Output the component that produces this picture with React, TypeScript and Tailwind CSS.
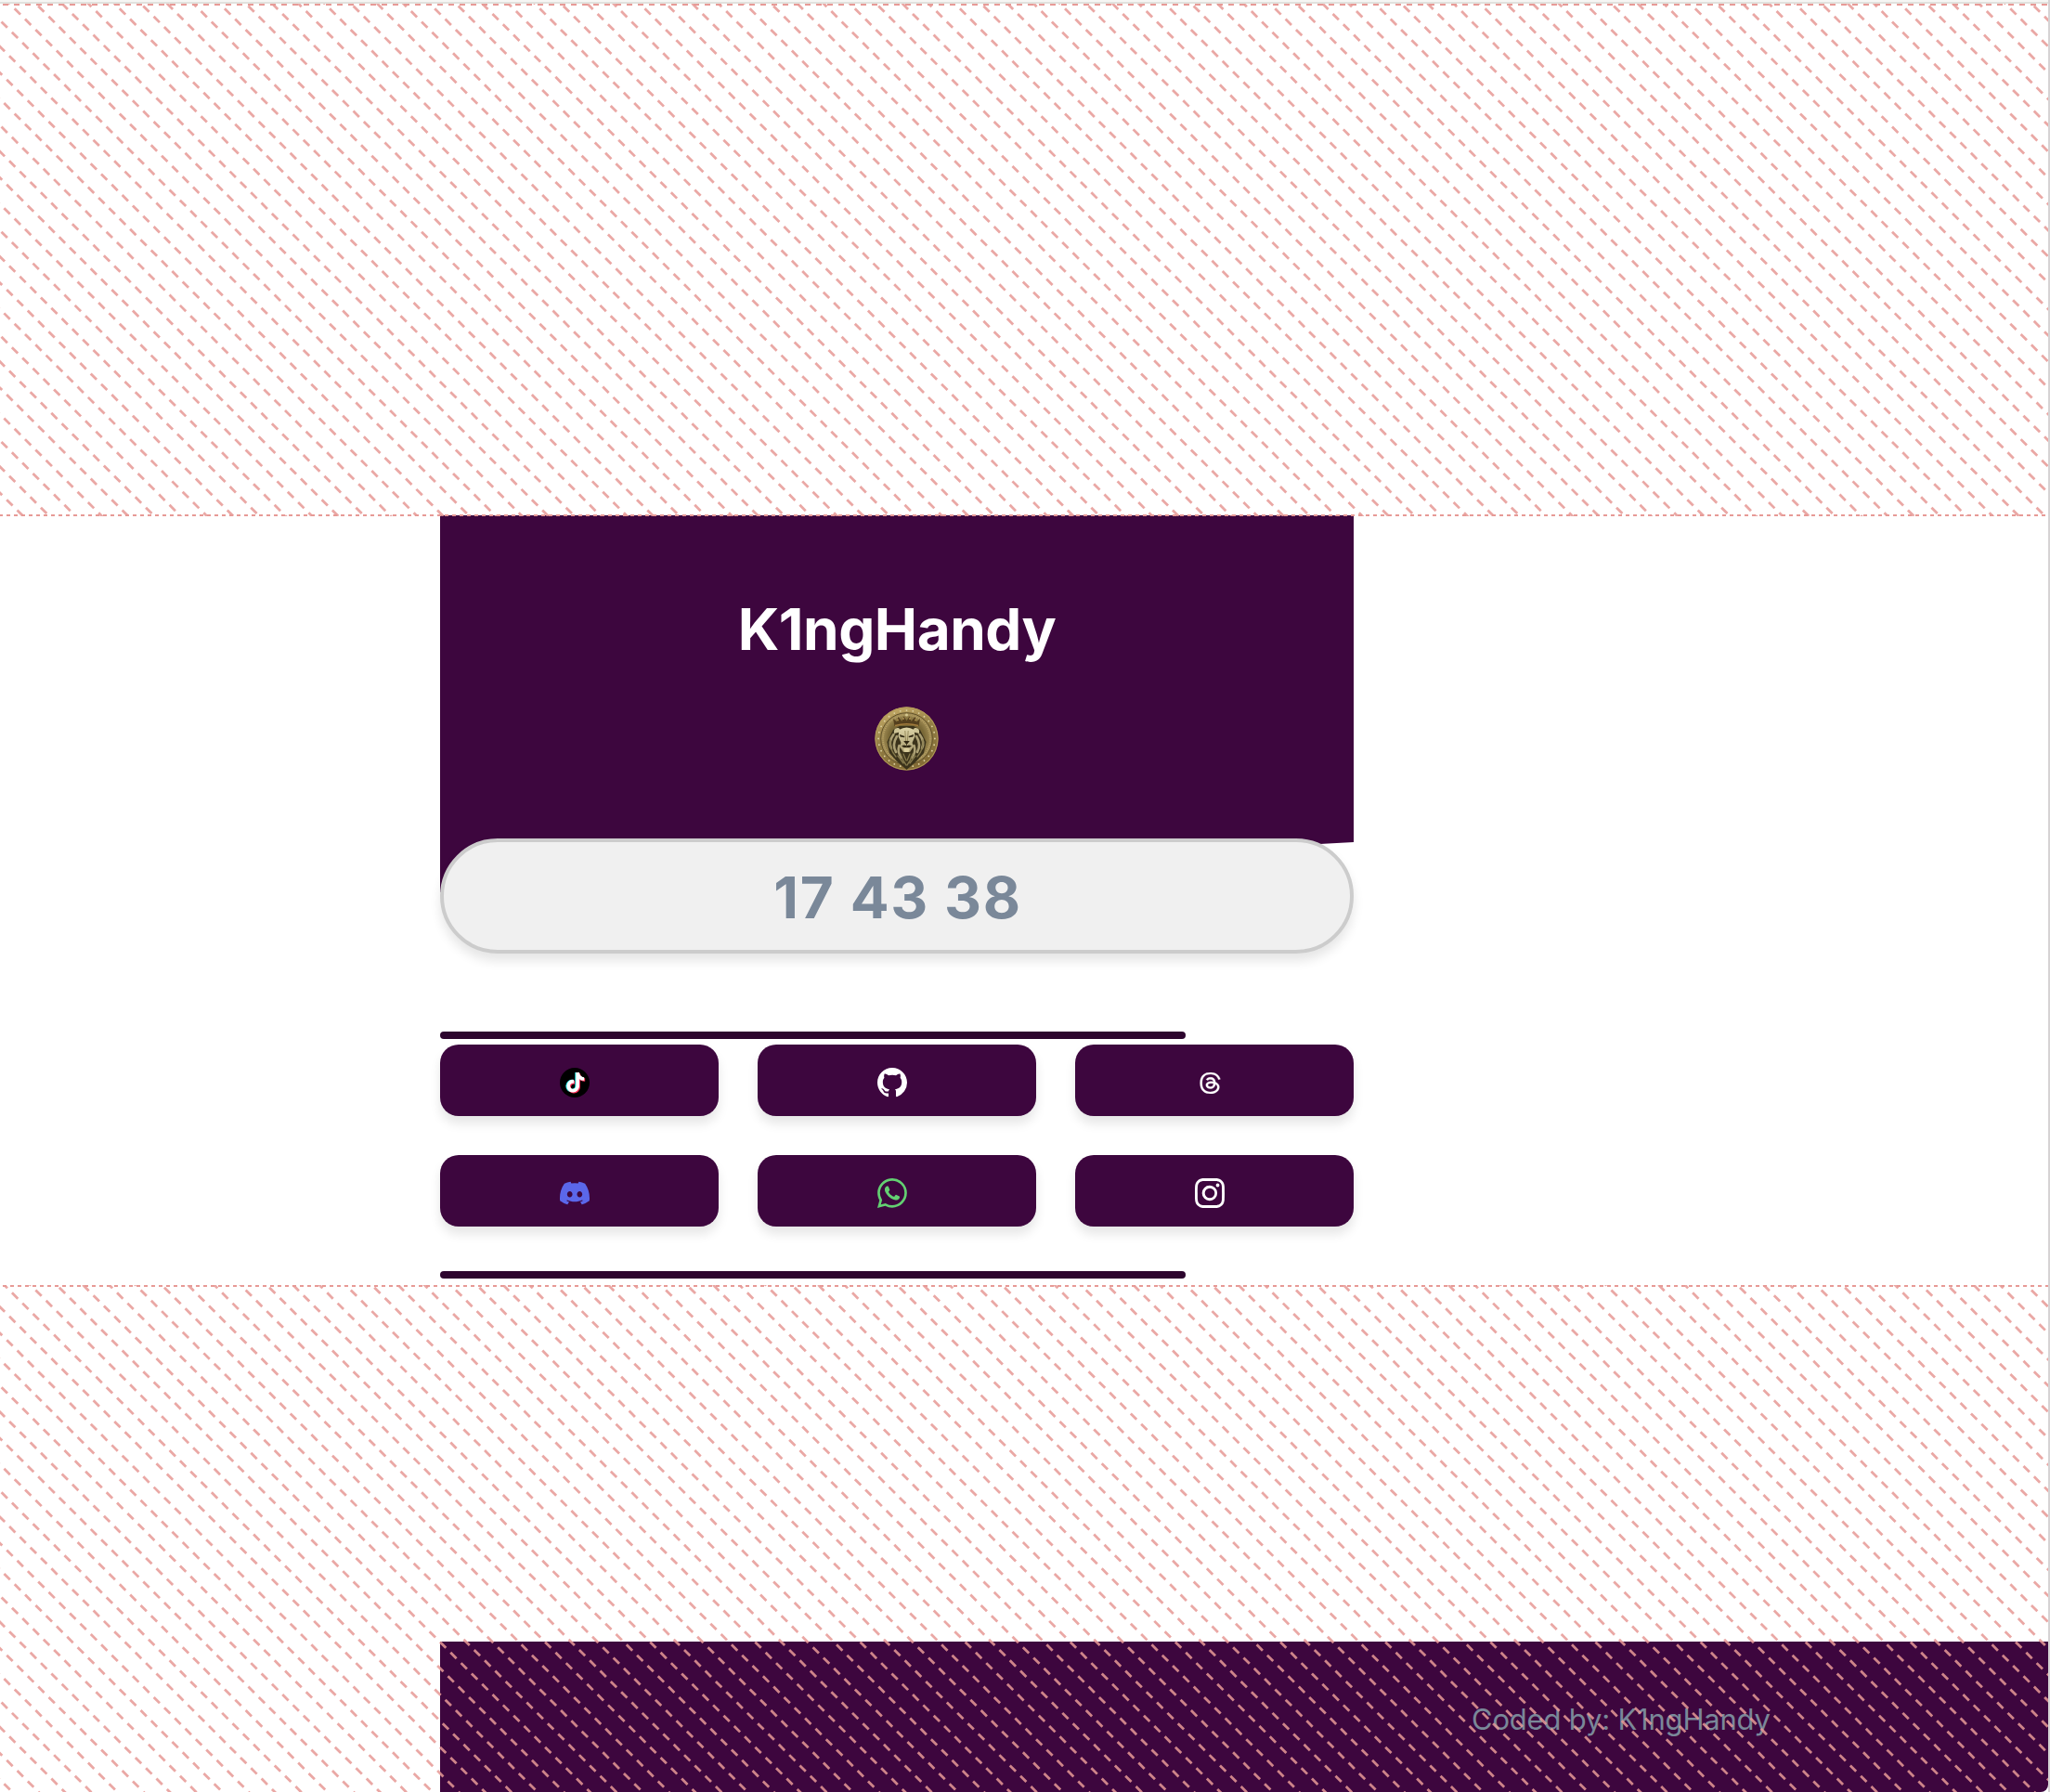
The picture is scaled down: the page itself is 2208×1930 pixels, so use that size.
import type { ReactNode } from "react";
import { FaTiktok } from "react-icons/fa6";
import { BsDiscord, BsGithub, BsInstagram, BsThreads, BsWhatsapp } from "react-icons/bs";

const HATCH = "#e79a96";

type HatchProps = {
  className: string;
  height: number;
  s: number;
  d: number;
  top?: [number, number];
  bottom?: [number, number];
};

/** Diagonal dashes, spaced 20px apart; s and d are the x+y and x-y of one dash centre. */
function Hatch({ className, height, s, d, top, bottom }: HatchProps) {
  const width = 2206;
  const r2 = Math.SQRT2;
  const u = s / r2 - 4.5 - 16 * 200;
  const v0 = -d / r2;
  const rows: number[] = [];
  const first = Math.ceil((-width / r2 - 10 - v0) / 20);
  const last = Math.floor((height / r2 + 10 - v0) / 20);
  for (let i = first; i <= last; i++) rows.push(v0 + i * 20);
  return (
    <svg className={className} width={width} height={height} viewBox={`0 0 ${width} ${height}`}>
      <g transform="rotate(45)" stroke={HATCH} strokeOpacity="0.86" strokeWidth="2.8" strokeDasharray="9 7">
        {rows.map((v) => (
          <line key={v} x1={u} x2={u + 16 * 400} y1={v} y2={v} />
        ))}
      </g>
      {top && (
        <line x1={top[0]} x2={width} y1="1" y2="1" stroke={HATCH} strokeWidth="2" strokeDasharray={top[1]} />
      )}
      {bottom && (
        <line x1={bottom[0]} x2={width} y1={height - 1} y2={height - 1} stroke={HATCH} strokeWidth="2" strokeDasharray={bottom[1]} />
      )}
    </svg>
  );
}

function Coin() {
  const dots = Array.from({ length: 28 }, (_, i) => (i * Math.PI * 2) / 28);
  return (
    <svg className="ml-5 h-[69px] w-[69px]" viewBox="0 0 69 69">
      <defs>
        <linearGradient id="rim" x1="0.3" y1="0" x2="0.7" y2="1">
          <stop offset="0" stopColor="#c4aa66" />
          <stop offset="0.45" stopColor="#917c44" />
          <stop offset="1" stopColor="#826a34" />
        </linearGradient>
        <radialGradient id="field" cx="0.5" cy="0.5" r="0.5">
          <stop offset="0" stopColor="#5b4b22" />
          <stop offset="0.7" stopColor="#7b6a38" />
          <stop offset="1" stopColor="#a8925a" />
        </radialGradient>
        <linearGradient id="face" x1="0" y1="0" x2="0" y2="1">
          <stop offset="0" stopColor="#ddd4a8" />
          <stop offset="1" stopColor="#a89c70" />
        </linearGradient>
      </defs>
      <circle cx="34.5" cy="34.5" r="34.2" fill="url(#rim)" />
      <circle cx="34.5" cy="34.5" r="33.5" fill="none" stroke="#b39a58" />
      {dots.map((a) => (
        <circle key={a} cx={34.5 + 30.4 * Math.cos(a)} cy={34.5 + 30.4 * Math.sin(a)} r="0.9" fill="#ddd2a4" />
      ))}
      <circle cx="34.5" cy="34.5" r="27.8" fill="url(#field)" stroke="#5f5029" strokeWidth="1" />
      <circle cx="34.5" cy="34.5" r="25.4" fill="none" stroke="#b8a468" strokeWidth="1.6" strokeDasharray="1 1.2" />
      <path d="M20 25 L13.5 38 L16 50 L24 59 L34.5 68 L45 59 L53 50 L55.5 38 L49 25 L42 21 H27 Z" fill="#3b331b" />
      <g fill="none" stroke="#aca074" strokeWidth="2.6" strokeLinecap="round">
        <path d="M20.5 30 Q14.5 38 18 45 M24 32 Q18.5 41 23 49 M26.5 42 Q24 49 29 55" />
        <path d="M48.5 30 Q54.5 38 51 45 M45 32 Q50.5 41 46 49 M42.5 42 Q45 49 40 55" />
      </g>
      <g fill="none" stroke="#85794c" strokeWidth="1.3" strokeLinecap="round">
        <path d="M17 36 Q16 46 23 54 M28 51 Q30 58 34 63 M25 53 L31 61 M31 51 L34 58" />
        <path d="M52 36 Q53 46 46 54 M41 51 Q39 58 35 63 M44 53 L38 61 M38 51 L35 58" />
      </g>
      <path d="M21 29 Q20 22 26 23 L29 27 Z M48 29 Q49 22 43 23 L40 27 Z" fill="#cec496" />
      <path d="M26.5 25 Q34.5 20 42.5 25 L43.5 32 L40.5 39 L42 43 L38 49 H31 L27 43 L28.5 39 L25.5 32 Z" fill="url(#face)" />
      <path d="M27 30 L32.5 32 L32 33.3 L27.5 32.5 Z M42 30 L36.5 32 L37 33.3 L41.5 32.5 Z" fill="#2f2713" />
      <path d="M32.8 26 L33.6 37 M36.2 26 L35.4 37" stroke="#8a7e4d" strokeWidth="0.8" />
      <path d="M31.2 37 H37.8 L35.4 40 H33.6 Z M29 42.5 Q32 40.5 34.5 42.5 Q37 40.5 40 42.5 L37.5 44 H31.5 Z" fill="#302713" />
      <path d="M34.5 39 V42" stroke="#302713" strokeWidth="0.8" />
      <path d="M31 45.5 Q34.5 44 38 45.5 L36.5 49 H32.5 Z" fill="#d8cd9c" />
      <path d="M21.5 21 L20 13 L24 16.5 L25.5 11 L29.5 16 L31.5 10.5 L34.5 15.5 L37.5 10.5 L39.5 16 L43.5 11 L45 16.5 L49 13 L47.5 21 Q34.5 18 21.5 21 Z" fill="#543f1e" />
      <path d="M22 20.5 Q34.5 17 47 20.5" fill="none" stroke="#a27b3d" strokeWidth="1.5" />
      <g fill="#b59653">
        <circle cx="25" cy="14.5" r="0.9" />
        <circle cx="31" cy="13" r="0.9" />
        <circle cx="38" cy="13" r="0.9" />
        <circle cx="44" cy="14.5" r="0.9" />
        <circle cx="34.5" cy="9" r="1.5" fill="#d6c890" />
      </g>
    </svg>
  );
}

function TikTok() {
  return (
    <span className="relative block size-8 rounded-full bg-black">
      <FaTiktok className="absolute top-[4.7px] left-[4.8px] size-[21.5px] text-[#25f4ee]" />
      <FaTiktok className="absolute top-[6.2px] left-[6.8px] size-[21.5px] text-[#fe2c55]" />
      <FaTiktok className="absolute top-[5.3px] left-[5.7px] size-[21.5px] text-white" />
    </span>
  );
}

function Tile({ children }: { children: ReactNode }) {
  return (
    <a className="flex h-[77px] items-center justify-center rounded-[20px] bg-[#3d063e] pt-[5px] pr-[10px] shadow-[0_8px_12px_rgba(0,0,0,0.1)]">
      {children}
    </a>
  );
}

function Rule({ className }: { className: string }) {
  return <div className={`h-2 w-[803px] rounded bg-[#2d052e] ${className}`} />;
}

export default function App() {
  return (
    <div className="relative flex h-[1930px] w-[2208px] flex-col overflow-hidden border-r-2 border-[#d6d3d4] bg-white font-['Inter',sans-serif]">
      <div className="h-1 shrink-0 border-b-2 border-[#e1e2de] bg-[#f6f6f4]" />

      <main className="mt-[551px] ml-[474px] flex w-[984px] flex-col">
        <header className="flex h-[406px] flex-col items-center bg-[#3d063e] [clip-path:polygon(0_0,100%_0,100%_352px,0_406px)]">
          <h1 className="mt-[83px] text-[62px] leading-[80px] font-bold tracking-[-0.5px] text-white">K1ngHandy</h1>
          <div className="mt-[43px]">
            <Coin />
          </div>
        </header>

        <div className="relative -mt-[58px] flex h-[124px] items-center justify-center rounded-full border-4 border-[#ccc] bg-[#f0f0f0] pt-[3px] pl-[2px] text-[62px] leading-none font-bold tracking-[1.6px] text-[#7a8899] shadow-[0_8px_12px_rgba(0,0,0,0.1)] [font-kerning:none]">
          17 43 38
        </div>

        <Rule className="mt-[84px]" />
        <nav className="mt-1.5 grid grid-cols-3 gap-[42px]">
          <Tile>
            <TikTok />
          </Tile>
          <Tile>
            <BsGithub className="size-8 text-white" />
          </Tile>
          <Tile>
            <BsThreads preserveAspectRatio="none" stroke="currentColor" strokeWidth="0.2" className="h-[23px] w-[25px] text-white" />
          </Tile>
          <Tile>
            <BsDiscord className="size-8 text-[#5b67ea]" />
          </Tile>
          <Tile>
            <BsWhatsapp className="size-8 text-[#63d072]" />
          </Tile>
          <Tile>
            <BsInstagram className="size-8 text-white" />
          </Tile>
        </nav>
        <Rule className="mt-12" />
      </main>

      <footer className="mt-[391px] ml-[474px] h-[162px] shrink-0 rounded-br-lg bg-[#3d063e] pt-[64px] pl-[1111px] text-[31px] leading-[40px] tracking-[-0.2px] text-[#7a8899]">
        Coded by: K1ngHandy
      </footer>

      <Hatch className="absolute top-1 left-0" height={552} s={27.3} d={10.4} top={[3, 6]} bottom={[-1, 4]} />
      <Hatch className="absolute top-[1384px] left-0" height={546} s={27.6} d={4.6} top={[3, 4]} />
    </div>
  );
}
